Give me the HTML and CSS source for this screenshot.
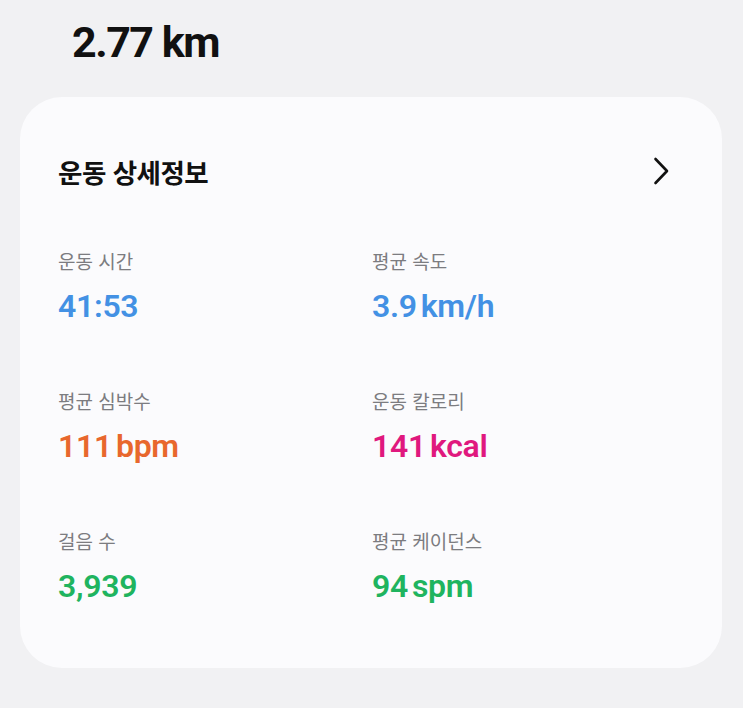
FILE: index.html
```html
<!DOCTYPE html>
<html lang="ko">
<head>
  <meta charset="UTF-8">
  <title>운동 상세정보</title>
  <link rel="stylesheet" href="styles.css">
</head>
<body>

  <div class="distance">2.77 km</div>

  <div class="card">
    <div class="card-head">
      <h2>운동 상세정보</h2>
      <svg class="chevron" width="16" height="30" viewBox="0 0 16 30">
        <path d="M2.5 3 L14 15 L2.5 27" fill="none" stroke="#111" stroke-width="2.6" stroke-linecap="round" stroke-linejoin="round"/>
      </svg>
    </div>

    <div class="stats">
      <div class="stat">
        <div class="label">운동 시간</div>
        <div class="value blue">41:53</div>
      </div>
      <div class="stat">
        <div class="label">평균 속도</div>
        <div class="value blue">3.9<span class="unit">km/h</span></div>
      </div>
      <div class="stat">
        <div class="label">평균 심박수</div>
        <div class="value orange">111<span class="unit">bpm</span></div>
      </div>
      <div class="stat">
        <div class="label">운동 칼로리</div>
        <div class="value pink">141<span class="unit">kcal</span></div>
      </div>
      <div class="stat">
        <div class="label">걸음 수</div>
        <div class="value green">3,939</div>
      </div>
      <div class="stat">
        <div class="label">평균 케이던스</div>
        <div class="value green">94<span class="unit">spm</span></div>
      </div>
    </div>
  </div>

</body>
</html>
```

FILE: styles.css
```css
body {
  margin: 0;
  background: #f1f1f3;
  font-family: Roboto, "Noto Sans CJK KR", sans-serif;
  color: #111;
}
.distance {
  padding: 18px 0 0 72px;
  height: 97px;
  box-sizing: border-box;
  font-size: 43px;
  line-height: 48px;
  font-weight: 700;
  letter-spacing: -1.5px;
}
.card {
  margin-left: 20px;
  width: 702px;
  height: 571px;
  box-sizing: border-box;
  background: #fbfbfd;
  border-radius: 42px;
  padding: 52px 53px 0 38px;
}
.card-head {
  display: flex;
  justify-content: space-between;
  align-items: center;
  height: 44px;
}
h2 {
  margin: 0;
  font-family: "Noto Sans CJK KR", sans-serif;
  font-size: 26.5px;
  font-weight: 700;
  letter-spacing: -0.5px;
}
.stats {
  display: grid;
  grid-template-columns: 314px 1fr;
  grid-auto-rows: 140px;
  margin-top: 54px;
}
.label {
  font-family: "Noto Sans CJK KR", sans-serif;
  font-size: 19px;
  line-height: 28px;
  color: #7c7c80;
}
.value {
  margin-top: 11px;
  font-size: 32px;
  line-height: 40px;
  font-weight: 600;
  letter-spacing: -0.3px;
}
.unit {
  margin-left: 4px;
}
.blue { color: #4391e4; }
.orange { color: #e8672d; }
.pink { color: #e0187e; }
.green { color: #1fb45f; }
```
